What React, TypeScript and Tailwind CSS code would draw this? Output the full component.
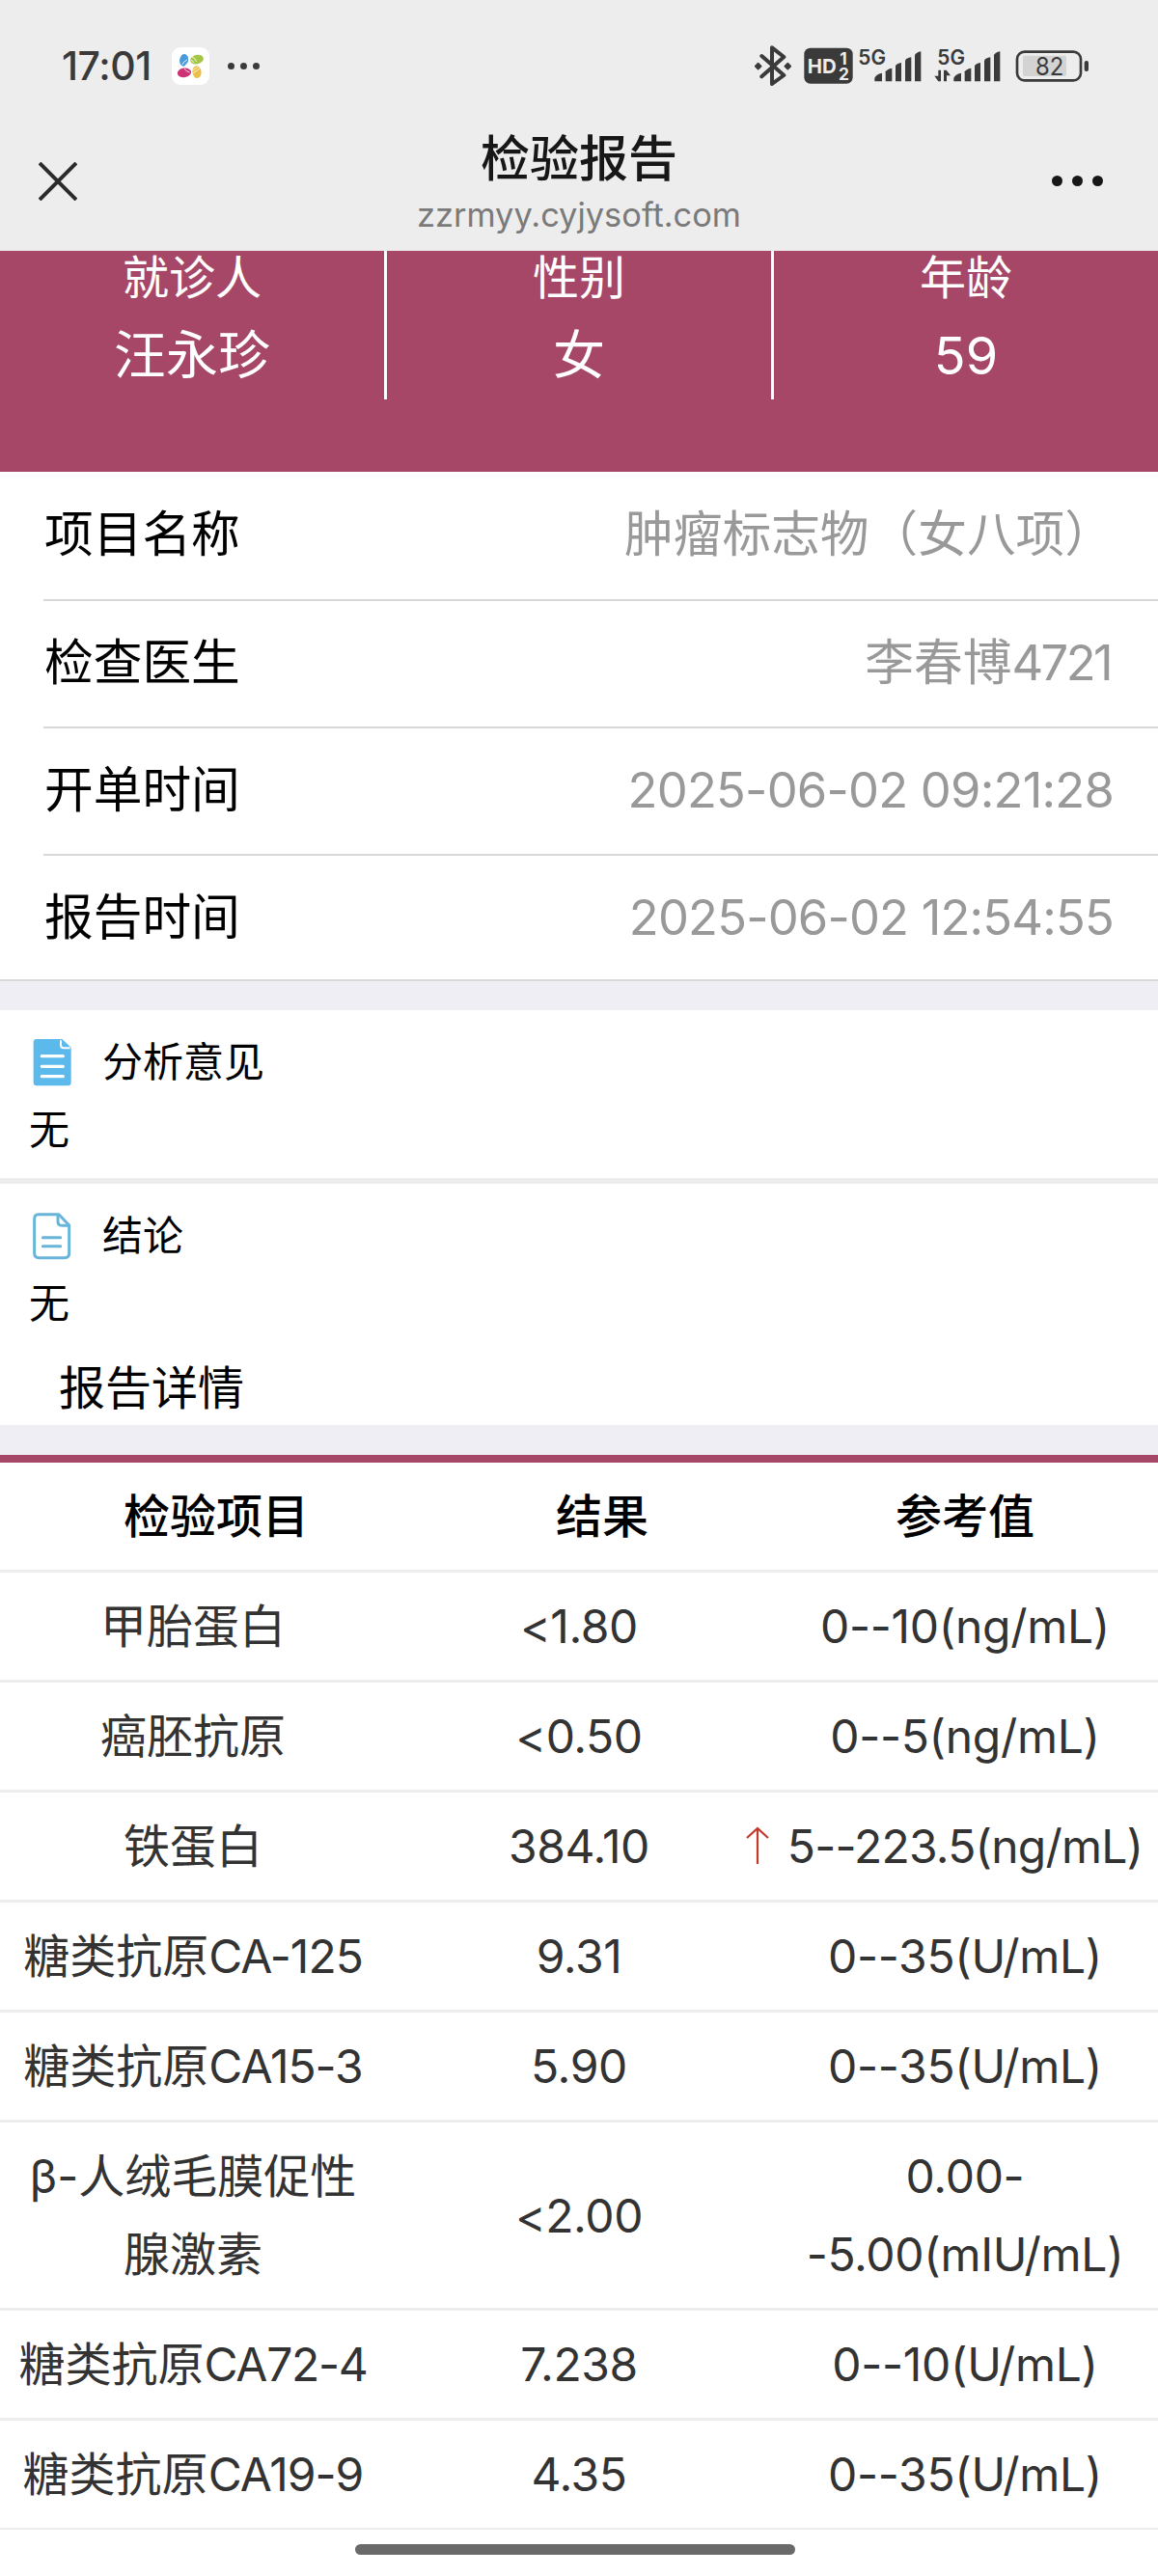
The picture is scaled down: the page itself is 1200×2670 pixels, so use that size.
const patient = [
  { label: "就诊人", value: "汪永珍" },
  { label: "性别", value: "女" },
  { label: "年龄", value: "59" },
];

const details = [
  { label: "项目名称", value: "肿瘤标志物（女八项）" },
  { label: "检查医生", value: "李春博", code: "4721" },
  { label: "开单时间", value: "2025-06-02 09:21:28", tracking: "tracking-[-0.78px]" },
  { label: "报告时间", value: "2025-06-02 12:54:55", tracking: "tracking-[-0.82px]" },
];

const results = [
  { name: ["甲胎蛋白"], value: "<1.80", range: ["0--10(ng/mL)"] },
  { name: ["癌胚抗原"], value: "<0.50", range: ["0--5(ng/mL)"] },
  { name: ["铁蛋白"], value: "384.10", range: ["5--223.5(ng/mL)"], high: true },
  { name: ["糖类抗原"], code: "CA-125", value: "9.31", range: ["0--35(U/mL)"] },
  { name: ["糖类抗原"], code: "CA15-3", value: "5.90", range: ["0--35(U/mL)"] },
  { name: ["β-人绒毛膜促性", "腺激素"], value: "<2.00", range: ["0.00-", "-5.00(mIU/mL)"] },
  { name: ["糖类抗原"], code: "CA72-4", value: "7.238", range: ["0--10(U/mL)"] },
  { name: ["糖类抗原"], code: "CA19-9", value: "4.35", range: ["0--35(U/mL)"] },
];

function AppBadge() {
  return (
    <svg className="ml-[23px] h-[39px] w-[39px]" viewBox="0 0 39 39">
      <rect width="39" height="39" rx="9" fill="#fff" />
      <ellipse cx="12.6" cy="13.3" rx="4.5" ry="6.4" fill="#4a9bdc" transform="rotate(8 12.6 13.3)" />
      <ellipse cx="26" cy="12.6" rx="7" ry="4.7" fill="#a5c644" transform="rotate(-12 26 12.6)" />
      <ellipse cx="13" cy="26.3" rx="7.2" ry="4.8" fill="#cc3275" transform="rotate(-10 13 26.3)" />
      <ellipse cx="26" cy="25.6" rx="4.6" ry="6.5" fill="#ecbf48" transform="rotate(-6 26 25.6)" />
      <g fill="none" stroke="#fff" strokeWidth="0.8">
        <path d="M11 18 Q12 14.5 16 13M14 19.5 Q14.5 17 17 16" />
        <path d="M21 10 Q24.5 11 25.5 15M19.5 13 Q22 13.5 22.5 16" />
        <path d="M13 22 Q14.5 25 18.5 26M16 20.5 Q17.5 23 20 23.5" />
        <path d="M22 23.5 Q25 22.5 27.5 19.5M22 26.5 Q26 25 29 21.5" />
      </g>
    </svg>
  );
}

function BluetoothIcon() {
  return (
    <svg className="h-[42px] w-[38px]" viewBox="69 48 114 126">
      <path
        d="M91 81 L160 141 L123 168 V55 L160 84 L91 145"
        fill="none"
        stroke="currentColor"
        strokeWidth="12"
        strokeLinecap="round"
        strokeLinejoin="round"
      />
      <path
        d="M71 113 L80 104 L89 113 L80 122 Z M163 113 L172 104 L181 113 L172 122 Z"
        fill="currentColor"
        stroke="currentColor"
        strokeWidth="5"
        strokeLinejoin="round"
      />
    </svg>
  );
}

function HdIcon() {
  return (
    <svg className="ml-[13px] h-[42px] w-[51px]" viewBox="222 48 153 126">
      <rect x="223" y="56" width="151" height="111" rx="19" fill="currentColor" />
      <g fill="#ededed" fontWeight="700">
        <text x="233" y="136" fontSize="62" textLength="90" lengthAdjust="spacingAndGlyphs">HD</text>
        <text x="334" y="109" fontSize="52">1</text>
        <text x="330" y="156" fontSize="52">2</text>
      </g>
    </svg>
  );
}

function Bars() {
  return (
    <>
      <path d="M442 160 V150 Q446 138 465 134 V160 Z" />
      <path d="M476 160 V130 Q480 122 496 119 V160 Z" />
      <path d="M507 160 V112 Q511 104 525 102 V160 Z" />
      <path d="M537 160 V95 Q541 87 556 85 V160 Z" />
      <path d="M567 160 V78 Q571 70 586 67 V160 Z" />
    </>
  );
}

function SignalIcon({ data = false }: { data?: boolean }) {
  return (
    <svg className={data ? "ml-3 h-[42px] w-[70px]" : "ml-[5px] h-[42px] w-[66px]"} viewBox={data ? "378 48 210 126" : "390 48 198 126"} fill="currentColor">
      <text x="391" y="108" fontSize="64" fontWeight="600" textLength="86" lengthAdjust="spacingAndGlyphs">5G</text>
      <Bars />
      {data && <path d="M394 125 H402 V160 H394 L382 143 H394 Z M411 160 V125 H419 L432 142 H420 V160 Z" />}
    </svg>
  );
}

function BatteryIcon() {
  return (
    <svg className="ml-[15px] h-[42px] w-[77px]" viewBox="876 48 231 126">
      <rect x="882" y="68" width="198" height="89" rx="23" fill="none" stroke="currentColor" strokeWidth="8" />
      <rect x="900" y="80" width="135" height="64" rx="6" fill="#d3d3d3" />
      <rect x="1091" y="96" width="13" height="33" rx="6" fill="currentColor" />
      <text x="939" y="140" fontSize="77" textLength="88" lengthAdjust="spacingAndGlyphs" fill="currentColor">82</text>
    </svg>
  );
}

function StatusBar() {
  return (
    <div className="flex h-[136px] items-center justify-between pl-[64px] pr-[71px] text-[#3a3a3a]">
      <div className="flex items-center">
        <span className="w-[91px] text-[41px] font-medium leading-none tracking-[-0.4px]">17:01</span>
        <AppBadge />
        <div className="ml-[19px] flex gap-[6px]">
          <i className="size-[7px] rounded-full bg-[#3a3a3a]" />
          <i className="size-[7px] rounded-full bg-[#3a3a3a]" />
          <i className="size-[7px] rounded-full bg-[#3a3a3a]" />
        </div>
      </div>
      <div className="flex items-center">
        <BluetoothIcon />
        <HdIcon />
        <SignalIcon />
        <SignalIcon data />
        <BatteryIcon />
      </div>
    </div>
  );
}

function TitleBar() {
  return (
    <div className="grid h-[124px] grid-cols-[1fr_auto_1fr] pl-10 pr-[57px]">
      <svg className="mt-8 size-10" viewBox="0 0 40 40" stroke="#2b2b2b" strokeWidth="4">
        <path d="M1 1 L39 39 M39 1 L1 39" />
      </svg>
      <div className="ml-[17px] pt-[2px] text-center">
        <h1 className="text-[51px] font-medium leading-[54px] text-[#171717]">检验报告</h1>
        <p className="mt-1 text-[34.4px] leading-[54px] text-[#7a7a7a]">zzrmyy.cyjysoft.com</p>
      </div>
      <div className="mt-[46px] flex justify-end gap-[10px]">
        <i className="size-[11px] rounded-full bg-[#171717]" />
        <i className="size-[11px] rounded-full bg-[#171717]" />
        <i className="size-[11px] rounded-full bg-[#171717]" />
      </div>
    </div>
  );
}

function FilledDocIcon() {
  return (
    <svg className="h-[49px] w-10" viewBox="42 47 120 147">
      <path d="M54 47 H133 L161 73 V182 Q161 192 151 192 H54 Q44 192 44 182 V57 Q44 47 54 47 Z" fill="#5bbaeb" />
      <path d="M129 51 V66 Q129 75 138 75 H158" fill="none" stroke="#fff" strokeWidth="6" />
      <path d="M70 100 H136 M70 132 H136 M70 163 H136" stroke="#fff" strokeWidth="10" strokeLinecap="round" />
    </svg>
  );
}

function OutlineDocIcon() {
  return (
    <svg className="h-[49px] w-10" viewBox="42 47 120 147" fill="none" stroke="#69b5da" strokeLinecap="round" strokeLinejoin="round">
      <path d="M59 52 H123 L155 86 V173 Q155 187 141 187 H61 Q47 187 47 173 V66 Q47 52 59 52 Z" strokeWidth="9" />
      <path d="M120 54 V74 Q120 87 133 87 H153" strokeWidth="9" />
      <path d="M73 124 H128 M73 151 H128" strokeWidth="9" />
    </svg>
  );
}

export default function App() {
  return (
    <main className="h-[2670px] w-[1200px] overflow-hidden bg-white font-['Inter','Noto_Sans_CJK_SC',sans-serif] text-black">
      <header className="h-[260px] bg-[#ededed]">
        <StatusBar />
        <TitleBar />
      </header>

      <section className="h-[229px] bg-[#a64768] text-center text-white">
        <div className="grid h-[154px] grid-cols-[401px_401px_398px]">
          {patient.map((item, i) => (
            <div key={item.label} className={i < 2 ? "border-r-[3px] border-white" : ""}>
              <p className="text-[48px] leading-[56px]">{item.label}</p>
              <p className="mt-[18px] text-[54px] leading-[70px]">{item.value}</p>
            </div>
          ))}
        </div>
      </section>

      <section className="h-[526px]">
        {details.map((item, i) => (
          <div
            key={item.label}
            className={`ml-[45px] flex h-[132px] items-center justify-between pb-[2px] pl-px pr-[46px] text-[50.7px] ${i > 0 ? "border-t-2 border-[#d9d9d9]" : ""}`}
          >
            <span>{item.label}</span>
            <span className={`text-[#999] ${item.tracking ?? ""}`}>
              {item.value}
              {item.code && <span className="mr-[3px] tracking-[-2.6px]">{item.code}</span>}
            </span>
          </div>
        ))}
      </section>
      <div className="h-8 border-t-2 border-[#d9d9d9] bg-[#efeef4]" />

      <section className="h-[174px] pl-[34px] pt-[28px]">
        <div className="flex items-center">
          <FilledDocIcon />
          <h2 className="ml-8 text-[42px] leading-[52px]">分析意见</h2>
        </div>
        <p className="-ml-[4px] mt-[18px] text-[42px] leading-[52px]">无</p>
      </section>
      <div className="h-[6px] bg-[#ededed]" />
      <section className="h-[250px] pl-[34px] pt-[28px]">
        <div className="flex items-center">
          <OutlineDocIcon />
          <h2 className="ml-8 text-[42px] leading-[52px]">结论</h2>
        </div>
        <p className="-ml-[4px] mt-[18px] text-[42px] leading-[52px]">无</p>
        <h2 className="ml-[27px] mt-[32px] text-[48px] leading-[60px]">报告详情</h2>
      </section>
      <div className="h-[31px] bg-[#efeef4]" />

      <section className="border-t-8 border-[#a64768] text-center text-[48px] leading-[81px]">
        <div className="grid h-[114px] grid-cols-3 items-center border-b-[3px] border-[#ededed] font-medium">
          <span className="pl-12">检验项目</span>
          <span className="pl-12">结果</span>
          <span>参考值</span>
        </div>
        {results.map((row, i) => (
          <div
            key={row.name[0] + (row.code ?? "")}
            className={`grid grid-cols-3 items-center border-[#ededed] py-[15px] text-[#333] ${i === results.length - 1 ? "border-b-2" : "border-b-[3px]"}`}
          >
            <div>
              {row.name.map((line) => (
                <p key={line}>
                  {line}
                  {row.code && (
                    <span className={row.code === "CA72-4" ? "tracking-[-1.3px]" : "tracking-[-1px]"}>{row.code}</span>
                  )}
                </p>
              ))}
            </div>
            <div className="tracking-[-0.4px]">{row.value}</div>
            <div className={`relative ${row.high ? "tracking-[-0.8px]" : "tracking-[-0.3px]"}`}>
              {row.high && (
                <svg className="absolute -left-[27px] top-[20px] h-[39px] w-6" viewBox="0 0 24 39" fill="none" stroke="#c33a2c" strokeWidth="2.2">
                  <path d="M12 39 V2 M1 12 L12 2 L23 12" />
                </svg>
              )}
              {row.range.map((line) => (
                <p key={line}>{line}</p>
              ))}
            </div>
          </div>
        ))}
      </section>

      <div className="mx-auto mt-[15px] h-[11px] w-[456px] -translate-x-1 rounded-full bg-[#6a6a6a]" />
    </main>
  );
}
